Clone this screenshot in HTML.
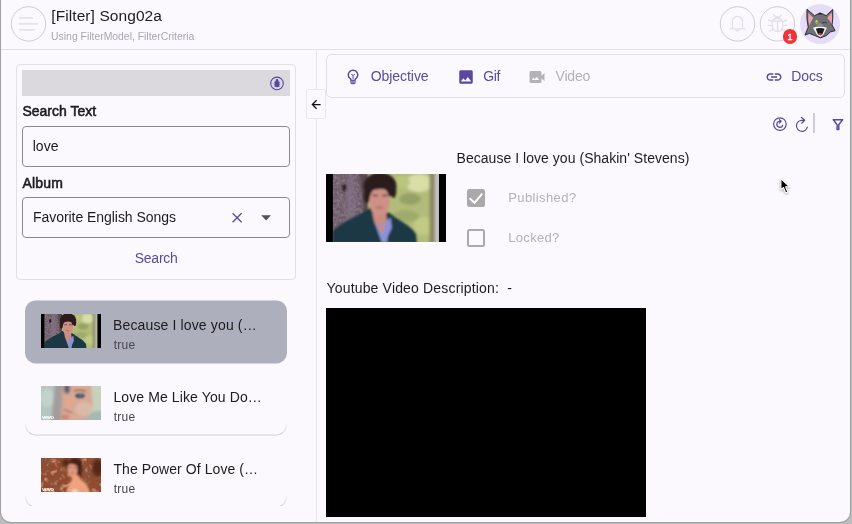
<!DOCTYPE html>
<html lang="en">
<head>
<meta charset="utf-8">
<title>[Filter] Song02a</title>
<style>
*{box-sizing:border-box;margin:0;padding:0}
html,body{width:852px;height:524px;overflow:hidden}
body{background:#bcbcbe;font-family:"Liberation Sans",sans-serif;color:#1d1b20;position:relative}
.abs{position:absolute}
#win{position:absolute;left:1px;top:0;width:849px;height:522px;background:#fcf9fe;border-radius:0 0 10px 10px;overflow:hidden;box-shadow:0 0 0 1px #a0a0a2;will-change:transform}
#edgeL{display:none}
.t{position:absolute;white-space:nowrap;line-height:1}
.hdrline{position:absolute;left:0;top:49px;width:849px;height:1px;background:#e3e1e6}
.circ{position:absolute;border:1px solid #d0ced3;border-radius:50%}
.purple{color:#5b4a9e}
.box{position:absolute;border:1px solid #8c8991;border-radius:4px}
</style>
</head>
<body>
<svg width="0" height="0" style="position:absolute">
  <defs>
    <filter id="b1" x="-5%" y="-5%" width="110%" height="110%"><feGaussianBlur stdDeviation="0.800"/></filter>
    <filter id="b2" x="-5%" y="-5%" width="110%" height="110%"><feGaussianBlur stdDeviation="1.600"/></filter>
    <filter id="noiseTrunk" x="0" y="0" width="100%" height="100%">
      <feTurbulence type="fractalNoise" baseFrequency="0.350" numOctaves="2" seed="3" result="n"/>
      <feColorMatrix in="n" type="matrix" values="0 0 0 0 0.300  0 0 0 0 0.230  0 0 0 0 0.300  1.600 0 0 0 -0.550"/>
    </filter>
    <filter id="noiseRed" x="0" y="0" width="100%" height="100%">
      <feTurbulence type="fractalNoise" baseFrequency="0.180" numOctaves="2" seed="8" result="n"/>
      <feColorMatrix in="n" type="matrix" values="0 0 0 0 0.250  0 0 0 0 0.090  0 0 0 0 0.040  4 0 0 0 -1.700"/>
    </filter>
    <filter id="noiseRed2" x="0" y="0" width="100%" height="100%">
      <feTurbulence type="fractalNoise" baseFrequency="0.160" numOctaves="2" seed="21" result="n"/>
      <feColorMatrix in="n" type="matrix" values="0 0 0 0 0.760  0 0 0 0 0.330  0 0 0 0 0.210  0 4 0 0 -2.100"/>
    </filter>
    <symbol id="imgShakin" viewBox="0 0 120 68">
      <rect width="120" height="68" fill="#000"/>
      <rect x="6.800" y="0" width="106.200" height="68" fill="#b0bb78"/>
      <g filter="url(#b2)">
        <rect x="38" y="-3" width="76" height="74" fill="#b2bc79"/>
        <ellipse cx="93" cy="9" rx="14" ry="9" fill="#d9dea9"/>
        <ellipse cx="84" cy="25" rx="11" ry="6" fill="#95a265"/>
        <ellipse cx="80" cy="42" rx="13" ry="6" fill="#9fab6c"/>
        <ellipse cx="98" cy="52" rx="10" ry="9" fill="#c2cb86"/>
        <ellipse cx="76" cy="8" rx="8" ry="6" fill="#bcc57e"/>
        <rect x="103.500" y="-2" width="5.500" height="72" fill="#87875f"/>
        <rect x="109" y="-2" width="4" height="72" fill="#c9c3c9"/>
      </g>
      <rect x="6.800" y="0" width="34" height="68" fill="#6d5c66"/>
      <rect x="6.800" y="0" width="34" height="68" filter="url(#noiseTrunk)"/>
      <g filter="url(#b1)">
        <ellipse cx="25" cy="30" rx="5" ry="30" fill="#85728a" opacity=".55"/>
        <path d="M16 12l3.500-3 1 6-3 4z" fill="#2a1c22"/>
        <path d="M33 0c3 20 5 40 6 52l3 0V0z" fill="#5a4a50"/>
      </g>
      <g filter="url(#b1)">
        <path d="M6.800 57C16 48 30 42 38 38l6-4 8 12 10-8 4 3c8 6 18 10 24 19l1 9H6.800z" fill="#1d3744"/>
        <path d="M46.500 38h13.500l1 8-4 12-7-2-4.500-10z" fill="#c98d82"/>
        <path d="M46.500 47l3.500 3 7 0 9-8 2 7-6 13-1 6h-9l-3-9z" fill="#8a92d6"/>
        <path d="M50 49l6 3 4-6-2 10-2 4z" fill="#c98d82"/>
        <path d="M38 38l7-5 3 14 8 22H38z" fill="#1d3744"/>
        <path d="M64 40l3 1 4 27h-9l4-14z" fill="#1d3744"/>
        <ellipse cx="54" cy="12" rx="16.500" ry="13.500" fill="#2c1f1e"/>
        <ellipse cx="41" cy="22" rx="3.200" ry="7" fill="#2c1f1e"/>
        <ellipse cx="53.500" cy="27.500" rx="10.200" ry="14.500" fill="#cf9186"/>
        <path d="M42 15c2-6 18-8 24-1l1 4c-8-4-16-4-25 0z" fill="#2c1f1e"/>
        <ellipse cx="67.500" cy="17" rx="2.800" ry="7" fill="#2c1f1e"/>
        <path d="M46.500 21.500h5.500M56 21.500h5.500" stroke="#5a3a3a" stroke-width="1.600"/>
        <path d="M50 33.500h7" stroke="#9a5a5a" stroke-width="1.300"/>
      </g>
      <rect x="0" y="0" width="6.800" height="68" fill="#000"/>
      <rect x="113" y="0" width="7" height="68" fill="#000"/>
    </symbol>
    <symbol id="imgEllie" viewBox="0 0 60 34">
      <rect width="60" height="34" fill="#b8c7c0"/>
      <g filter="url(#b2)">
        <rect x="-3" y="-3" width="22" height="40" fill="#b5c6c0"/>
        <ellipse cx="6" cy="12" rx="7" ry="9" fill="#c3d3cc"/>
        <path d="M14-3h14l-6 40h-12z" fill="#a39c9b"/>
        <path d="M22-3h32v40H20z" fill="#d8a995"/>
        <ellipse cx="43" cy="23" rx="9" ry="7" fill="#dcb9a9"/>
        <path d="M50-3h14v40H44l8-16z" fill="#c6d2bf"/>
        <path d="M40 37l12-12 12 0v12z" fill="#a6b8af"/>
        <ellipse cx="26" cy="3" rx="3" ry="5" fill="#4f5f70"/>
      </g>
      <g filter="url(#b1)">
        <ellipse cx="39" cy="9.800" rx="4.600" ry="2.300" fill="#36475a"/>
        <ellipse cx="39.500" cy="9.500" rx="1.500" ry="1.300" fill="#5b85b5"/>
        <path d="M33 5.200c4-1.800 8-1.600 12 .4" stroke="#9a6a55" stroke-width="1.400" fill="none"/>
        <ellipse cx="28" cy="16" rx="2.500" ry="3.500" fill="#f0a07f"/>
        <path d="M22.500 23.500c3 1 6 2.500 9 3.300" stroke="#c2756f" stroke-width="1.700" fill="none"/>
        <ellipse cx="24" cy="31" rx="4" ry="2.500" fill="#c98a72"/>
      </g>
    </symbol>
    <symbol id="imgCeline" viewBox="0 0 60 34">
      <rect width="60" height="34" fill="#8f4a30"/>
      <rect width="60" height="34" filter="url(#noiseRed)"/>
      <rect width="60" height="34" filter="url(#noiseRed2)" opacity=".9"/>
      <g filter="url(#b2)">
        <ellipse cx="57" cy="10" rx="6" ry="9" fill="#5a2616"/>
        <ellipse cx="25" cy="5" rx="4" ry="4" fill="#5a2616"/>
      </g>
      <g filter="url(#b1)">
        <ellipse cx="34" cy="8" rx="7.500" ry="8" fill="#4b2015"/>
        <path d="M36 10l5 1-1 9-5 3z" fill="#4b2015"/>
        <ellipse cx="31.500" cy="11.500" rx="5" ry="8" fill="#e09a80"/>
        <path d="M27 4c2-3 8-3 10 1l0 4c-3-3-7-4-10-2z" fill="#4b2015"/>
        <path d="M31 18l6-1 3 5c4 2 7 5 9 13H25c1-5 3-10 6-13z" fill="#f0a27f"/>
        <path d="M28.500 9.500h2.500M33 9.800h2.500" stroke="#7a4030" stroke-width="1"/>
        <path d="M30 14.800h3" stroke="#b0504a" stroke-width="1.100"/>
        <ellipse cx="34" cy="33.500" rx="3" ry="2" fill="#dfe6c8"/>
      </g>
    </symbol>
  </defs>
</svg>
<div id="edgeL"></div>
<div id="win">
  <!-- header -->
  <svg class="abs" style="left:0;top:0" width="60" height="50" viewBox="1 0 60 50"><circle cx="28.500" cy="23.900" r="17.200" fill="none" stroke="#cfcdd2" stroke-width="1"/></svg>
  <svg class="abs" style="left:0;top:0" width="60" height="50" viewBox="1 0 60 50"><g stroke="#e5e2e8" stroke-width="1.7" fill="none"><path d="M19.1 17.9H32.9M19.1 23.9H38M19.1 29.9H34.8"/></g></svg>
  <div class="t" id="title" style="left:50.3px;top:7.95px;letter-spacing:0.08px;font-size:15.5px;color:#1d1b20">[Filter] Song02a</div>
  <div class="t" id="subtitle" style="left:50.1px;top:31.5px;letter-spacing:0px;font-size:10.4px;color:#a9a6ae">Using FilterModel, FilterCriteria</div>
  <svg class="abs" style="left:711px;top:0" width="90" height="50" viewBox="712 0 90 50"><circle cx="737.500" cy="23.900" r="17.200" fill="none" stroke="#cfcdd2" stroke-width="1"/><circle cx="777.400" cy="23.900" r="17.200" fill="none" stroke="#cfcdd2" stroke-width="1"/></svg>
  <svg class="abs" style="left:711px;top:0" width="90" height="50" viewBox="712 0 90 50"><g stroke="#e3dfe9" stroke-width="1.4" fill="none" stroke-linecap="round" stroke-linejoin="round">
    <path d="M730.2 28.9H744.7M732.4 28.9V21.4a5.05 5.05 0 0 1 10.1 0V28.9M735.8 29.6a1.7 1.9 0 0 0 3.3 0"/>
    <path d="M772.2 24.5c0-4.3 2-6.3 5.4-6.3s5.4 2 5.4 6.3-2 7-5.4 7-5.4-2.700-5.400-7zM772.600 21H782.600M777.600 21V31.300M775.200 18.500a2.500 2.500 0 0 1 4.800 0M775.400 17.200L774 14.700M779.800 17.200L781.200 14.700M772.300 21.300L768.600 20.300M782.900 21.300L786.600 20.300M772.200 25.400H768.300M783 25.400H786.900M773 29L769.800 31.500M782.200 29L785.400 31.500"/>
  </g></svg>
  
  <div class="abs" style="left:799px;top:4px;width:40px;height:40px;border-radius:50%;background:#e6dcfa"></div>
  <svg class="abs" style="left:794px;top:0" width="57" height="50" viewBox="0 0 597 524">
    <path d="M125 97 L205 165 Q265 120 325 165 L395 100 Q400 200 388 262 L420 322 L370 335 L330 372 L268 397 L205 372 L150 350 L105 368 L138 285 Q118 200 125 97Z" fill="#6f7176" stroke="#1c1c1e" stroke-width="9" stroke-linejoin="round"/>
    <path d="M238 150 L262 128 L290 150Z" fill="#1c1c1e"/>
    <path d="M140 135 L192 188 Q160 225 152 272 Q132 210 140 135Z" fill="#f2a3a8"/>
    <path d="M384 130 L338 188 Q368 215 384 252 Q394 190 384 130Z" fill="#f2a3a8"/>
    <path d="M188 292 Q262 262 334 290 L296 368 L266 388 L232 368Z" fill="#f4f4f4"/>
    <path d="M218 300 Q262 285 310 300 L286 362 L266 372 L240 360Z" fill="#1a1a1c"/>
    <ellipse cx="264" cy="357" rx="17" ry="12" fill="#e8343a"/>
    <ellipse cx="228" cy="232" rx="14" ry="22" fill="#c9d24a" transform="rotate(-12 228 232)"/>
    <ellipse cx="232" cy="240" rx="6" ry="10" fill="#3c7a38"/>
    <path d="M280 245 Q305 225 335 240" stroke="#2a2a2c" stroke-width="9" fill="none"/>
    <ellipse cx="262" cy="262" rx="30" ry="18" fill="#8b8d93"/>
  </svg>
  <div class="abs" style="left:782.3px;top:28.5px;width:13.6px;height:15px;border-radius:7px;background:#ee3339"></div>
  <div class="t" style="left:786.2px;top:31.6px;font-size:9.5px;color:#fff;-webkit-text-stroke:0.3px #fff">1</div>
  <div class="hdrline"></div>

  <!-- left filter card -->
  <div class="abs" style="left:15px;top:64px;width:280px;height:216px;border:1px solid #e1dfe4;border-radius:4px"></div>
  <div class="abs" style="left:21px;top:70px;width:268px;height:26px;background:#dcd9de"></div>
  <svg class="abs" style="left:268px;top:75px" width="16" height="16" viewBox="269 74.600 16 16"><circle cx="277" cy="83" r="6.300" fill="none" stroke="#5b47a1" stroke-width="1.100"/><ellipse cx="277" cy="83.600" rx="2.300" ry="3.200" fill="#5b47a1"/><circle cx="277" cy="80" r="1.300" fill="#5b47a1"/><path d="M274 81.800L280 81.800M273.800 83.800H280.200M274.200 85.800L279.800 85.800" stroke="#5b47a1" stroke-width="0.800"/></svg>
  <div class="t" id="lblSearch" style="left:21.4px;top:104.2px;letter-spacing:0.02px;font-size:14px;-webkit-text-stroke:0.550px #1d1b20">Search Text</div>
  <div class="box" style="left:21px;top:126px;width:268px;height:41px"></div>
  <div class="t" id="love" style="left:31.7px;top:139.2px;letter-spacing:0.07px;font-size:14px">love</div>
  <div class="t" id="lblAlbum" style="left:21.5px;top:176.2px;letter-spacing:0.2px;font-size:14px;-webkit-text-stroke:0.550px #1d1b20">Album</div>
  <div class="box" style="left:21px;top:197px;width:268px;height:41px"></div>
  <div class="t" id="fav" style="left:32.0px;top:210.2px;letter-spacing:-0.05px;font-size:14px">Favorite English Songs</div>
  <svg class="abs" style="left:229px;top:209px" width="46" height="18" viewBox="230 209 46 18"><path d="M232.600 213.200L241.600 222.200M241.600 213.200L232.600 222.200" stroke="#5b47a1" stroke-width="1.300" fill="none"/><path d="M261.200 215.300H271L266.100 220.400Z" fill="#545257"/></svg>
  <div class="t purple" id="searchBtn" style="left:133.7px;top:251.2px;letter-spacing:-0.24px;font-size:14px">Search</div>

  <!-- list -->
  <div class="abs" id="list" style="left:0;top:295px;width:312px;height:211px;overflow:hidden">
    <svg class="abs" style="left:0;top:0" width="312" height="214" viewBox="1 295 312 214">
      <defs><linearGradient id="arcg" x1="0" y1="0" x2="0" y2="1"><stop offset="0" stop-color="#d2d0da" stop-opacity="0.250"/><stop offset="1" stop-color="#d2d0da"/></linearGradient></defs>
      <rect x="25" y="300.400" width="262" height="63" rx="10.500" fill="#adafbc"/>
      <path d="M25.500 363.800H286.500" stroke="#9d9fab" stroke-width="0" fill="none"/>
      <path d="M25.400 424.500A10.500 10.500 0 0 0 35.900 435H276.100A10.500 10.500 0 0 0 286.600 424.500" stroke="url(#arcg)" stroke-width="1.100" fill="none"/>
      <path d="M25.400 496.500A10.500 10.500 0 0 0 35.900 507H276.100A10.500 10.500 0 0 0 286.600 496.500" stroke="url(#arcg)" stroke-width="1.100" fill="none"/>
    </svg>
    <svg class="abs" style="left:40px;top:19px" width="60" height="34"><use href="#imgShakin"/></svg>
    <svg class="abs" style="left:40px;top:91px" width="60" height="34"><use href="#imgEllie"/></svg>
    <div class="t" style="left:41px;top:119px;font-size:6.200px;font-weight:bold;color:#fff;letter-spacing:-0.650px">vevo</div>
    <svg class="abs" style="left:40px;top:163px" width="60" height="34"><use href="#imgCeline"/></svg>
    <div class="t" style="left:41px;top:191px;font-size:6.200px;font-weight:bold;color:#fff;letter-spacing:-0.650px">vevo</div>
    <div class="t" id="it1" style="left:112.0px;top:23.2px;letter-spacing:0.14px;font-size:14px">Because I love you (…</div>
    <div class="t" id="it1s" style="left:112.7px;top:44.2px;letter-spacing:0.250px;font-size:12px;color:#49454f">true</div>
    <div class="t" id="it2" style="left:112.4px;top:95.2px;letter-spacing:0.11px;font-size:14px">Love Me Like You Do…</div>
    <div class="t" id="it2s" style="left:112.7px;top:116.2px;letter-spacing:0.250px;font-size:12px;color:#49454f">true</div>
    <div class="t" id="it3" style="left:112.5px;top:167.2px;letter-spacing:0.07px;font-size:14px">The Power Of Love (…</div>
    <div class="t" id="it3s" style="left:112.7px;top:188.2px;letter-spacing:0.250px;font-size:12px;color:#49454f">true</div>
  </div>

  <!-- divider + collapse -->
  <div class="abs" style="left:314.500px;top:50px;width:1.600px;height:472px;background:#e6e4e9"></div>
  <div class="abs" style="left:305px;top:89px;width:20px;height:30px;background:#fcf9fe;border:1px solid #e9e7ec;border-radius:2px"></div>
  <svg class="abs" style="left:309px;top:98px" width="14" height="14" viewBox="310 98 14 14"><path d="M320.600 104.500H312.600M316.600 100.200L312.300 104.500L316.600 108.800" stroke="#111" stroke-width="1.250" fill="none"/></svg>

  <!-- tab bar -->
  <div class="abs" style="left:325px;top:54px;width:519px;height:44px;border:1px solid #e1dfe4;border-radius:5px"></div>
  <svg class="abs" style="left:343px;top:66px" width="20" height="20" viewBox="344 65.400 20 20"><path d="M350.900 79.300V78.600A4.700 4.700 0 1 1 355.100 78.600V79.300" fill="none" stroke="#5b47a1" stroke-width="1.400"/><path d="M350.300 79.100H355.700V81.900A1.700 1.700 0 0 1 354 83.600H352A1.700 1.700 0 0 1 350.300 81.900Z" fill="#5b47a1"/><path d="M350.300 80.700H355.700M350.500 82.200H355.500" stroke="#d9d3ec" stroke-width="0.550"/><path d="M351.500 73.400L353 75.200L354.500 73.400M353 75.200V78.600" stroke="#5b47a1" stroke-width="1" fill="none"/></svg>
  <svg class="abs" style="left:455.900px;top:67.600px" width="18" height="18" viewBox="0 0 24 24"><path fill="#5b47a1" d="M21 19V5c0-1.100-.9-2-2-2H5c-1.100 0-2 .9-2 2v14c0 1.100.9 2 2 2h14c1.100 0 2-.9 2-2zM8.500 13.500l2.500 3.010L14.500 12l4.500 6H5l3.500-4.500z"/></svg>
  <svg class="abs" style="left:527.100px;top:67.800px" width="18" height="18" viewBox="0 0 24 24"><path fill="#b4b2b7" d="M18 10.480V6c0-1.100-.9-2-2-2H4c-1.100 0-2 .9-2 2v12c0 1.100.9 2 2 2h12c1.100 0 2-.9 2-2v-4.480l4 3.980v-11l-4 3.980zM5 16l2.380-3.170L9 15l2.620-3.500L15 16H5z"/></svg>
  <svg class="abs" style="left:763.800px;top:67.500px" width="18" height="18" viewBox="0 0 24 24"><path fill="#5b47a1" d="M3.900 12c0-1.710 1.390-3.100 3.100-3.100h4V7H7c-2.760 0-5 2.240-5 5s2.240 5 5 5h4v-1.900H7c-1.710 0-3.100-1.390-3.100-3.100zM8 13h8v-2H8v2zm9-6h-4v1.900h4c1.710 0 3.100 1.390 3.100 3.100s-1.390 3.100-3.100 3.100h-4V17h4c2.760 0 5-2.240 5-5s-2.240-5-5-5z"/></svg>
  <div class="t purple" id="tObjective" style="left:369.7px;top:69.2px;letter-spacing:-0.05px;font-size:14px">Objective</div>
  <div class="t purple" id="tGif" style="left:482.2px;top:69.2px;letter-spacing:-0.3px;font-size:14px">Gif</div>
  <div class="t" id="tVideo" style="left:554.5px;top:69.2px;letter-spacing:-0.2px;font-size:14px;color:#b3b1b6">Video</div>
  <div class="t purple" id="tDocs" style="left:790.2px;top:69.2px;letter-spacing:-0.07px;font-size:14px">Docs</div>

  <!-- toolbar -->
  <svg class="abs" style="left:769px;top:110px" width="80" height="28" viewBox="770 110 80 28"><g fill="none" stroke="#5b47a1" stroke-width="1.200" stroke-linecap="round" stroke-linejoin="round">
    <circle cx="779.900" cy="124.100" r="6.300"/>
    <path d="M782.700 125.200A3 3 0 1 1 780.300 121.300M779.400 119.600L781.200 121.300L779.400 123"/>
    <path d="M807.300 127.200A5.500 5.500 0 1 1 802 120.300H804.400M801.500 117.500L804.700 120.300L801.700 123.200"/>
    </g>
    <path d="M833.300 119.700H842.600L838.800 124.600V129.400H837.100V124.600Z" fill="none" stroke="#5b47a1" stroke-width="1.500" stroke-linejoin="round"/>
  </svg>
  <div class="abs" style="left:812.300px;top:113px;width:1.600px;height:20px;background:#cfc9e4"></div>

  <!-- content -->
  <div class="t" id="songTitle" style="left:455.5px;top:151.2px;letter-spacing:0.04px;font-size:14px">Because I love you (Shakin' Stevens)</div>
  <svg class="abs" style="left:325px;top:174px" width="120" height="68"><use href="#imgShakin"/></svg>
  <div class="abs" style="left:466px;top:189px;width:18px;height:18px;border-radius:2.500px;background:#a9a8ab"></div>
  <svg class="abs" style="left:466px;top:189px" width="18" height="18" viewBox="467 189 18 18"><path d="M469.500 198.300L474.500 202.800L482.300 193.600" fill="none" stroke="#fff" stroke-width="1.900"/></svg>
  <div class="abs" style="left:466px;top:229px;width:18px;height:18px;border-radius:2.500px;border:2px solid #a9a8ab"></div>
  <div class="t" id="pub" style="left:507.2px;top:191.2px;letter-spacing:0.4px;font-size:13px;color:#b3b1b6">Published?</div>
  <div class="t" id="lock" style="left:507.2px;top:231.2px;letter-spacing:0.33px;font-size:13px;color:#b3b1b6">Locked?</div>
  <div class="t" id="ytd" style="left:325.5px;top:281.2px;letter-spacing:0.17px;font-size:14px;white-space:pre">Youtube Video Description:  -</div>
  <div class="abs" style="left:325px;top:308px;width:320px;height:209px;background:#000"></div>
  <svg class="abs" style="left:775px;top:174px;filter:drop-shadow(0 1px 1px rgba(0,0,0,.35))" width="20" height="24" viewBox="776 174 20 24"><path d="M780.900 178.500V189.900L783.500 187.500L785.700 192.900L787.800 192L785.600 186.700H789.300Z" fill="#000" stroke="#fff" stroke-width="1.100" stroke-linejoin="round"/></svg>
</div>
</body>
</html>
